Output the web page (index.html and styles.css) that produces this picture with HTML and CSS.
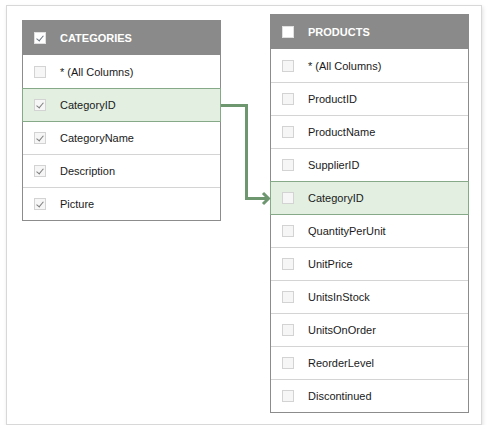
FILE: index.html
```html
<!DOCTYPE html>
<html>
<head>
<meta charset="utf-8">
<link rel="stylesheet" href="styles.css">
</head>
<body>
<div class="frame">
  <div class="table cats">
    <div class="head"><span class="cb cb-head checked"></span><span class="title">CATEGORIES</span></div>
    <div class="row"><span class="cb"></span><span>* (All Columns)</span></div>
    <div class="row sel"><span class="cb checked"></span><span>CategoryID</span></div>
    <div class="row"><span class="cb checked"></span><span>CategoryName</span></div>
    <div class="row"><span class="cb checked"></span><span>Description</span></div>
    <div class="row"><span class="cb checked"></span><span>Picture</span></div>
  </div>
  <div class="table prods">
    <div class="head"><span class="cb cb-head"></span><span class="title">PRODUCTS</span></div>
    <div class="row"><span class="cb"></span><span>* (All Columns)</span></div>
    <div class="row"><span class="cb"></span><span>ProductID</span></div>
    <div class="row"><span class="cb"></span><span>ProductName</span></div>
    <div class="row"><span class="cb"></span><span>SupplierID</span></div>
    <div class="row sel"><span class="cb"></span><span>CategoryID</span></div>
    <div class="row"><span class="cb"></span><span>QuantityPerUnit</span></div>
    <div class="row"><span class="cb"></span><span>UnitPrice</span></div>
    <div class="row"><span class="cb"></span><span>UnitsInStock</span></div>
    <div class="row"><span class="cb"></span><span>UnitsOnOrder</span></div>
    <div class="row"><span class="cb"></span><span>ReorderLevel</span></div>
    <div class="row"><span class="cb"></span><span>Discontinued</span></div>
  </div>
  <svg class="link" width="60" height="110" viewBox="0 0 60 110">
    <path d="M0 7.5 H25.5 V100.5 H47" fill="none" stroke="#6e966f" stroke-width="3"/>
    <path d="M42 95 L47.5 100.5 L42 106" fill="none" stroke="#6e966f" stroke-width="3"/>
  </svg>
</div>
</body>
</html>
```
FILE: styles.css
```css
html, body {
  margin: 0;
  padding: 0;
  background: #ffffff;
}
body {
  font-family: "Liberation Sans", Arial, sans-serif;
  font-size: 11px;
  color: #1a1a1a;
}
.frame {
  position: relative;
  margin: 5px 0 0 6px;
  width: 459px;
  height: 418px;
  border: 1px solid #d8d8d8;
  box-shadow: 1px 2px 4px rgba(0,0,0,0.12);
  display: flex;
  align-items: flex-start;
  gap: 49px;
  padding-left: 15px;
  box-sizing: content-box;
}
.table {
  width: 199px;
  box-sizing: border-box;
  border: 1px solid #8c8c8c;
  border-top: none;
  background: #ffffff;
}
.cats { margin-top: 14px; }
.prods { margin-top: 8px; }
.head {
  height: 35px;
  margin: 0 -1px;
  background: #8a8a8a;
  display: flex;
  align-items: center;
  padding-left: 12px;
}
.title {
  color: #ffffff;
  font-weight: bold;
  font-size: 11px;
  margin-left: 14px;
}
.row {
  height: 32px;
  border-top: 1px solid #d4d4d4;
  display: flex;
  align-items: center;
  padding-left: 11px;
}
.head + .row { border-top: none; height: 33px; }
.row span:last-child { margin-left: 14px; }
.row.sel {
  background: #e2efe1;
  border: 1px solid #86a987;
  margin: 0 -1px;
  padding-left: 11px;
  height: 32px;
}
.row.sel + .row { border-top: none; height: 32px; }
.cb {
  width: 12px;
  height: 12px;
  box-sizing: border-box;
  border: 1px solid #d3d3d3;
  background: #f6f6f6;
  flex: none;
  position: relative;
}
.cb-head {
  background: #ffffff;
  border-color: #e0e0e0;
}
.cb.checked::after {
  content: "";
  position: absolute;
  left: 3px;
  top: 1px;
  width: 3px;
  height: 6px;
  border-right: 1px solid #7d7d7d;
  border-bottom: 1px solid #7d7d7d;
  transform: rotate(40deg);
}
.cb-head.checked::after {
  border-color: #6a7480;
}
.link {
  position: absolute;
  left: 214px;
  top: 92px;
}
```
